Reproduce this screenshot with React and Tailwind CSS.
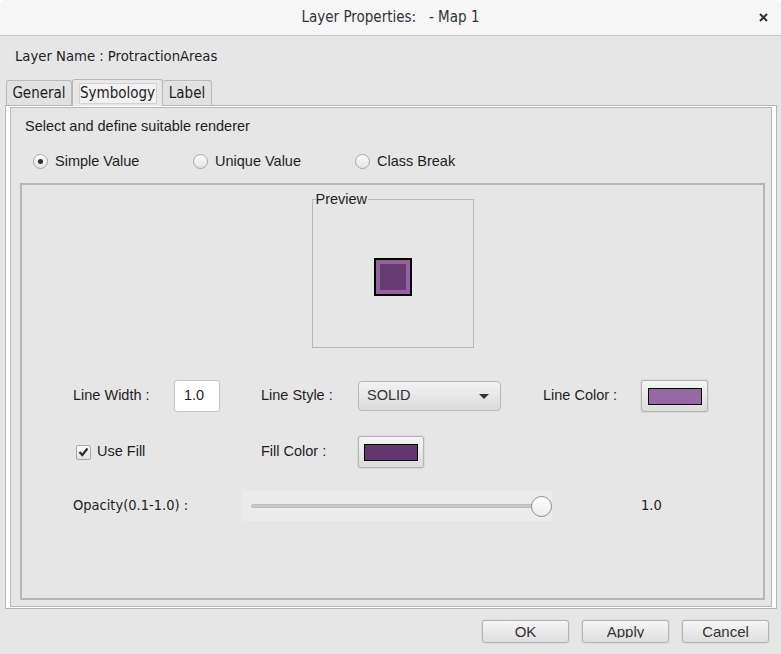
import React from 'react';

const narrow = '[font-family:"Liberation_Sans_Narrow","DejaVu_Sans_Condensed","Liberation_Sans",sans-serif]';

function Radio({ checked, label, width }) {
    return (
        <div className="flex items-center" style={{ width }}>
            <div className="w-[15px] h-[15px] rounded-full border border-[#a8a8a8] bg-gradient-to-b from-[#fbfbfb] to-[#e4e4e4] flex items-center justify-center">
                {checked && <div className="w-[5px] h-[5px] rounded-full bg-[#2e2e2e]" />}
            </div>
            <span className="ml-[7px] text-[14.5px] text-[#1e1e1e]">{label}</span>
        </div>
    );
}

function ColorButton({ color, w }) {
    return (
        <div className="p-px bg-[#dadada] rounded-[3px]">
            <div className={`${w} h-[32px] rounded-[3px] border border-[#b4b4b4] bg-gradient-to-b from-[#f4f4f4] to-[#dcdcdc] flex items-center justify-center`}>
                <div className="w-[54px] h-[17px] border border-black" style={{ backgroundColor: color }} />
            </div>
        </div>
    );
}

// the reference clips the descenders of the button labels, keep that
function DialogButton({ children }) {
    return (
        <div className="p-px bg-[#dcdcdc] rounded-[3px]">
            <div className="w-[87px] h-[23px] rounded-[3px] border border-[#b4b4b4] bg-gradient-to-b from-[#f6f6f6] to-[#dedede] flex justify-center">
                <div className="mt-[2px] h-[15px] overflow-hidden text-[15px] leading-[17px] text-[#333]">{children}</div>
            </div>
        </div>
    );
}

export default function App() {
    return (
        <div className="w-[781px] h-[654px] bg-white overflow-hidden [font-family:'Liberation_Sans',sans-serif]">
            <div className="w-full h-full bg-[#e6e6e6] rounded-t-[7px] overflow-hidden flex flex-col">
                {/* title bar */}
                <div className="h-[36px] shrink-0 bg-[#f6f6f6] border-b border-[#c6c6c6] flex items-center relative">
                    <div className={`flex-1 text-center text-[15px] text-[#2e3436] whitespace-pre ${narrow}`}>Layer Properties:   - Map 1</div>
                    <div className="absolute right-[13px] top-[13px]">
                        <svg width="9" height="9" viewBox="0 0 9 9">
                            <path d="M1 1 L8 8 M8 1 L1 8" stroke="#2e3436" strokeWidth="2" />
                        </svg>
                    </div>
                </div>

                <div className={`h-[41px] shrink-0 pl-[15px] flex items-center text-[14.7px] text-[#1e1e1e] ${narrow}`}>Layer Name : ProtractionAreas</div>

                {/* tabs */}
                <div className={`h-[28px] shrink-0 pl-[6px] flex items-end text-[15px] text-[#1e1e1e] ${narrow}`}>
                    <div className="w-[66px] h-[25px] border border-b-0 border-[#b8b8b8] rounded-t-[3px] bg-[#e2e2e2] flex items-center justify-center">General</div>
                    <div className="w-[91px] h-[27px] border border-b-0 border-[#b8b8b8] rounded-t-[3px] bg-[#e8e8e8] flex items-start justify-center pt-[3px] relative -mb-px">
                        <div className="w-[78px] h-[21px] bg-[#f2f2f2] border border-[#d2d2d2] flex items-center justify-center">Symbology</div>
                    </div>
                    <div className="w-[49px] h-[25px] border border-b-0 border-l-0 border-[#b8b8b8] rounded-t-[3px] bg-[#e2e2e2] flex items-center justify-center">Label</div>
                </div>

                {/* tab panel */}
                <div className="ml-[5px] w-[772px] h-[504px] shrink-0 border border-[#b4b4b4] bg-white pl-[4px] pr-[4px] py-px">
                    <div className="w-full h-full border border-[#b8b8b4] bg-[#e6e6e6] flex flex-col">
                        <div className="h-[37px] shrink-0 pl-[14px] flex items-center text-[14.5px] text-[#1e1e1e]">Select and define suitable renderer</div>
                        <div className="h-[33px] shrink-0 pl-[22px] flex items-center">
                            <Radio checked label="Simple Value" width="160px" />
                            <Radio label="Unique Value" width="162px" />
                            <Radio label="Class Break" width="140px" />
                        </div>

                        {/* renderer panel */}
                        <div className="ml-[9px] mt-[5px] w-[745px] h-[417px] border-2 border-[#b6b6b2] flex flex-col">
                            <div className="mx-auto mt-[14px] w-[162px] h-[149px] border border-[#b8b8b8] relative flex justify-center pt-[58px]">
                                <div className="absolute -top-[9px] left-[3px] bg-[#e6e6e6] pr-px text-[14.5px] leading-[16px] text-[#1e1e1e]">Preview</div>
                                <div className="w-[38px] h-[38px] bg-black p-[2px]">
                                    <div className="w-full h-full border-[4px] border-[#93629f] bg-[#673a73]" />
                                </div>
                            </div>

                            {/* line row */}
                            <div className="mt-[31px] h-[34px] pl-[51px] flex items-center text-[14.5px] text-[#1e1e1e]">
                                <div className="w-[101px]">Line Width :</div>
                                <div className="w-[46px] h-[32px] mr-[41px] bg-white border border-[#c4c4c4] rounded-[3px] flex items-center pl-[9px]">1.0</div>
                                <div className="w-[97px]">Line Style :</div>
                                <div className="w-[143px] h-[30px] mr-[42px] border border-[#b8b8b8] rounded-[4px] bg-gradient-to-b from-[#f2f2f2] to-[#dcdcdc] flex items-center justify-between pl-[8px] pr-[11px] text-[#333]">
                                    <span>SOLID</span>
                                    <svg width="10" height="5" viewBox="0 0 10 5"><path d="M0 0 L10 0 L5 5 Z" fill="#333" /></svg>
                                </div>
                                <div className="w-[97px]">Line Color :</div>
                                <ColorButton color="#9768a3" w="w-[67px]" />
                            </div>

                            {/* fill row */}
                            <div className="mt-[22px] h-[34px] pl-[54px] flex items-center text-[14.5px] text-[#1e1e1e]">
                                <div className="w-[185px] flex items-center">
                                    <div className="w-[15px] h-[15px] border border-[#a8a8a8] rounded-[2px] bg-gradient-to-b from-[#fbfbfb] to-[#e4e4e4] flex items-center justify-center">
                                        <svg width="11" height="10" viewBox="0 0 11 10"><path d="M1.5 5 L4.3 8 L9.5 1.5" stroke="#2e2e2e" strokeWidth="2.2" fill="none" /></svg>
                                    </div>
                                    <span className="ml-[6px]">Use Fill</span>
                                </div>
                                <div className="w-[96px]">Fill Color :</div>
                                <ColorButton color="#65356f" w="w-[66px]" />
                            </div>

                            {/* opacity row */}
                            <div className={`mt-[22px] h-[30px] pl-[51px] flex items-center text-[14.5px] text-[#1e1e1e] ${narrow}`}>
                                <div className="w-[169px]">Opacity(0.1-1.0) :</div>
                                <div className="w-[310px] h-[30px] bg-[#ebebeb] flex items-center">
                                    <div className="ml-[9px] w-[290px] h-[4px] rounded-full bg-[#c8c8c8] border border-[#bdbdbd]" />
                                    <div className="-ml-[10px] w-[21px] h-[21px] rounded-full border border-[#8c8c8c] bg-gradient-to-b from-white to-[#ececec]" />
                                </div>
                                <div className="ml-[89px]">1.0</div>
                            </div>
                        </div>
                    </div>
                </div>

                {/* buttons */}
                <div className="flex justify-end gap-[11px] pr-[11px] pt-[10px]">
                    <DialogButton>OK</DialogButton>
                    <DialogButton>Apply</DialogButton>
                    <DialogButton>Cancel</DialogButton>
                </div>
            </div>
        </div>
    );
}
